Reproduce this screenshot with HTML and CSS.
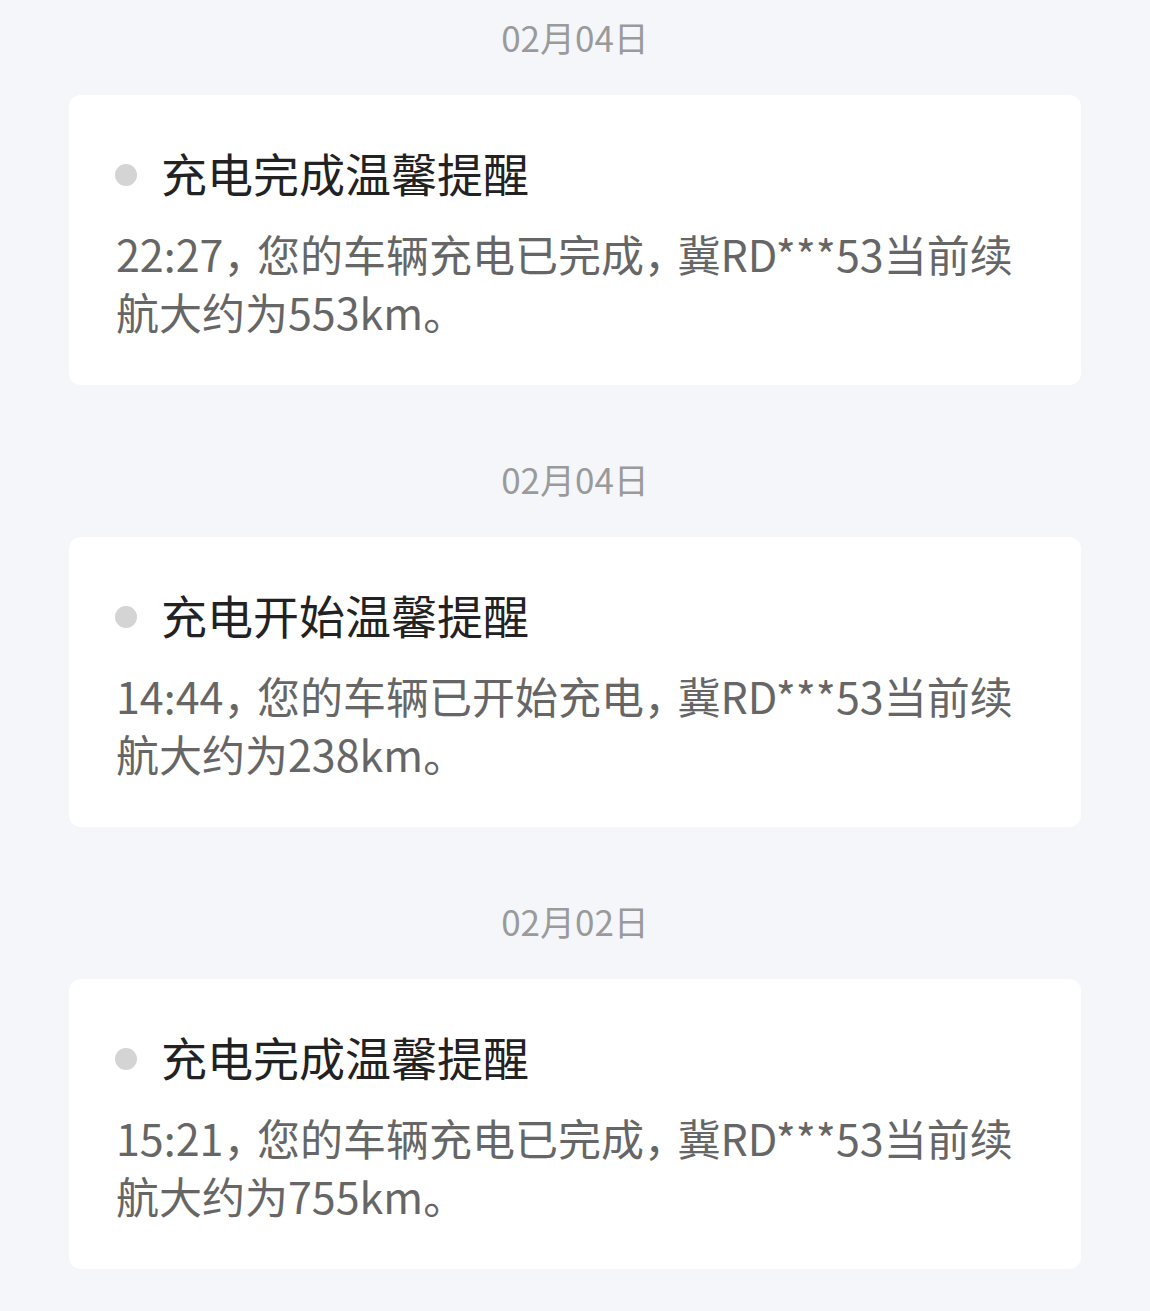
FILE: index.html
```html
<!DOCTYPE html>
<html lang="zh-CN">
<head>
    <meta charset="UTF-8">
    <meta name="viewport" content="width=device-width, initial-scale=1.0">
    <title>消息通知</title>
    <link rel="stylesheet" href="styles.css">
</head>
<body>
    <div class="list">
        <div class="group">
            <div class="date">02月04日</div>
            <div class="card">
                <div class="title"><span class="dot"></span>充电完成温馨提醒</div>
                <p class="content">22:27<span class="comma">，</span>您的车辆充电已完成<span class="comma">，</span>冀RD***53当前续航大约为553km。</p>
            </div>
        </div>

        <div class="group">
            <div class="date">02月04日</div>
            <div class="card">
                <div class="title"><span class="dot"></span>充电开始温馨提醒</div>
                <p class="content">14:44<span class="comma">，</span>您的车辆已开始充电<span class="comma">，</span>冀RD***53当前续航大约为238km。</p>
            </div>
        </div>

        <div class="group">
            <div class="date">02月02日</div>
            <div class="card">
                <div class="title"><span class="dot"></span>充电完成温馨提醒</div>
                <p class="content">15:21<span class="comma">，</span>您的车辆充电已完成<span class="comma">，</span>冀RD***53当前续航大约为755km。</p>
            </div>
        </div>
    </div>
</body>
</html>
```

FILE: styles.css
```css
body {
    font-family: "Noto Sans CJK SC", "Noto Sans", sans-serif;
    background-color: #f5f6fa;
    margin: 0;
    padding: 0;
}

.list {
    padding: 16px 69px 42px;
}

.group + .group {
    margin-top: 73px;
}

.date {
    height: 42px;
    line-height: 42px;
    margin-bottom: 37px;
    text-align: center;
    font-size: 35px;
    color: #9a9a9a;
}

.card {
    background-color: #fff;
    border-radius: 12px;
    padding: 49px 47px 45px;
}

.title {
    display: flex;
    align-items: center;
    height: 56px;
    font-size: 46px;
    color: #222;
}

.dot {
    width: 22px;
    height: 22px;
    border-radius: 50%;
    background-color: #d4d4d4;
    margin: 6px 24px 0 -1px;
    flex-shrink: 0;
}

.content {
    margin: 24px 0 0;
    font-size: 43px;
    line-height: 58px;
    color: #666;
}

.comma {
    font-feature-settings: "halt";
    margin-right: 12px;
}
```
